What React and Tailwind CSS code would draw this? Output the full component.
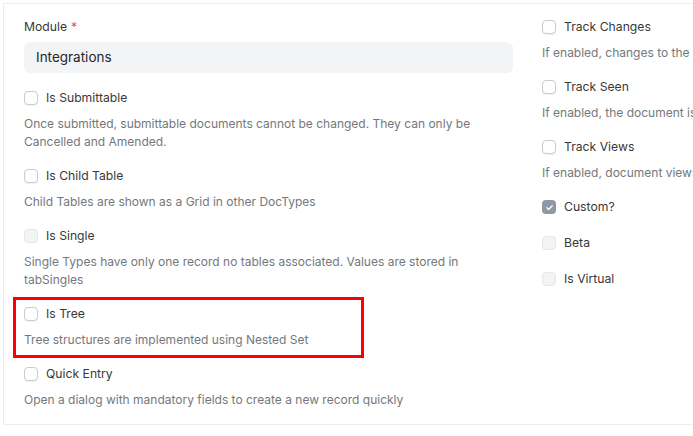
import React from "react";

function Box({ state }) {
  if (state === "checked") {
    return (
      <span className="flex h-[14px] w-[14px] shrink-0 items-center justify-center rounded-[4px] bg-[#8d99a6]">
        <svg width="9" height="9" viewBox="0 0 10 10" fill="none">
          <path d="M2 5.2L4.1 7.2L8 3" stroke="white" strokeWidth="1.5" strokeLinecap="round" strokeLinejoin="round" />
        </svg>
      </span>
    );
  }
  if (state === "disabled") {
    return <span className="h-[14px] w-[14px] shrink-0 rounded-[4px] border border-[#e5e7ea] bg-[#f3f3f4]" />;
  }
  return (
    <span className="h-[14px] w-[14px] shrink-0 rounded-[4px] border border-[#c7ccd1] bg-white shadow-[0_1px_1px_rgba(0,0,0,0.06)]" />
  );
}

function Check({ label, desc, state = "normal", last }) {
  return (
    <div className={last ? "" : desc ? "mb-[15px]" : "mb-[16px]"}>
      <div className="flex h-[20px] items-center gap-[8px]">
        <Box state={state} />
        <span className="text-[12.2px] text-[#383838]">{label}</span>
      </div>
      {desc && (
        <div className="mt-[7px] text-[12px] leading-[18px] text-[#74787c]">{desc}</div>
      )}
    </div>
  );
}

export default function App() {
  return (
    <div
      className="h-[436px] w-[693px] overflow-hidden bg-white"
      style={{ fontFamily: "Inter, 'Noto Sans', sans-serif" }}
    >
      <div className="ml-[3px] mt-[3px] w-[1200px] border-l border-t border-[#ededed]">
        <div className="flex gap-[29px] border-b border-[#ededed] pb-[15px] pl-[20px] pt-[13px]">
          <div className="w-[489px] shrink-0">
            <div className="mb-[15px]">
              <div className="flex h-[20px] items-center text-[12.2px] text-[#383838]">
                Module <span className="ml-[4px] text-[#e24c4c]">*</span>
              </div>
              <div className="mt-[5px] flex h-[31px] items-center rounded-[6px] bg-[#f3f4f5] px-[12px] text-[13.5px] text-[#1f272e]">
                Integrations
              </div>
            </div>
            <Check
              label="Is Submittable"
              desc={
                <>
                  Once submitted, submittable documents cannot be changed. They can only be
                  <br />
                  Cancelled and Amended.
                </>
              }
            />
            <Check label="Is Child Table" desc="Child Tables are shown as a Grid in other DocTypes" />
            <Check
              label="Is Single"
              state="disabled"
              desc={
                <>
                  Single Types have only one record no tables associated. Values are stored in
                  <br />
                  tabSingles
                </>
              }
            />
            <div className="relative">
              <div className="pointer-events-none absolute left-[-11px] top-[-7px] h-[61px] w-[351px] border-[3px] border-[#ff0000]" />
              <Check label="Is Tree" desc="Tree structures are implemented using Nested Set" />
            </div>
            <Check
              label="Quick Entry"
              desc="Open a dialog with mandatory fields to create a new record quickly"
              last
            />
          </div>
          <div className="w-[489px] shrink-0">
            <Check label="Track Changes" desc="If enabled, changes to the document are tracked and shown in timeline" />
            <Check label="Track Seen" desc="If enabled, the document is marked as seen, the first time a user opens it" />
            <Check label="Track Views" desc="If enabled, document views are tracked, this can happen multiple times" />
            <Check label="Custom?" state="checked" />
            <Check label="Beta" state="disabled" />
            <div className="mt-[1px]">
              <Check label="Is Virtual" state="disabled" last />
            </div>
          </div>
        </div>
      </div>
    </div>
  );
}
